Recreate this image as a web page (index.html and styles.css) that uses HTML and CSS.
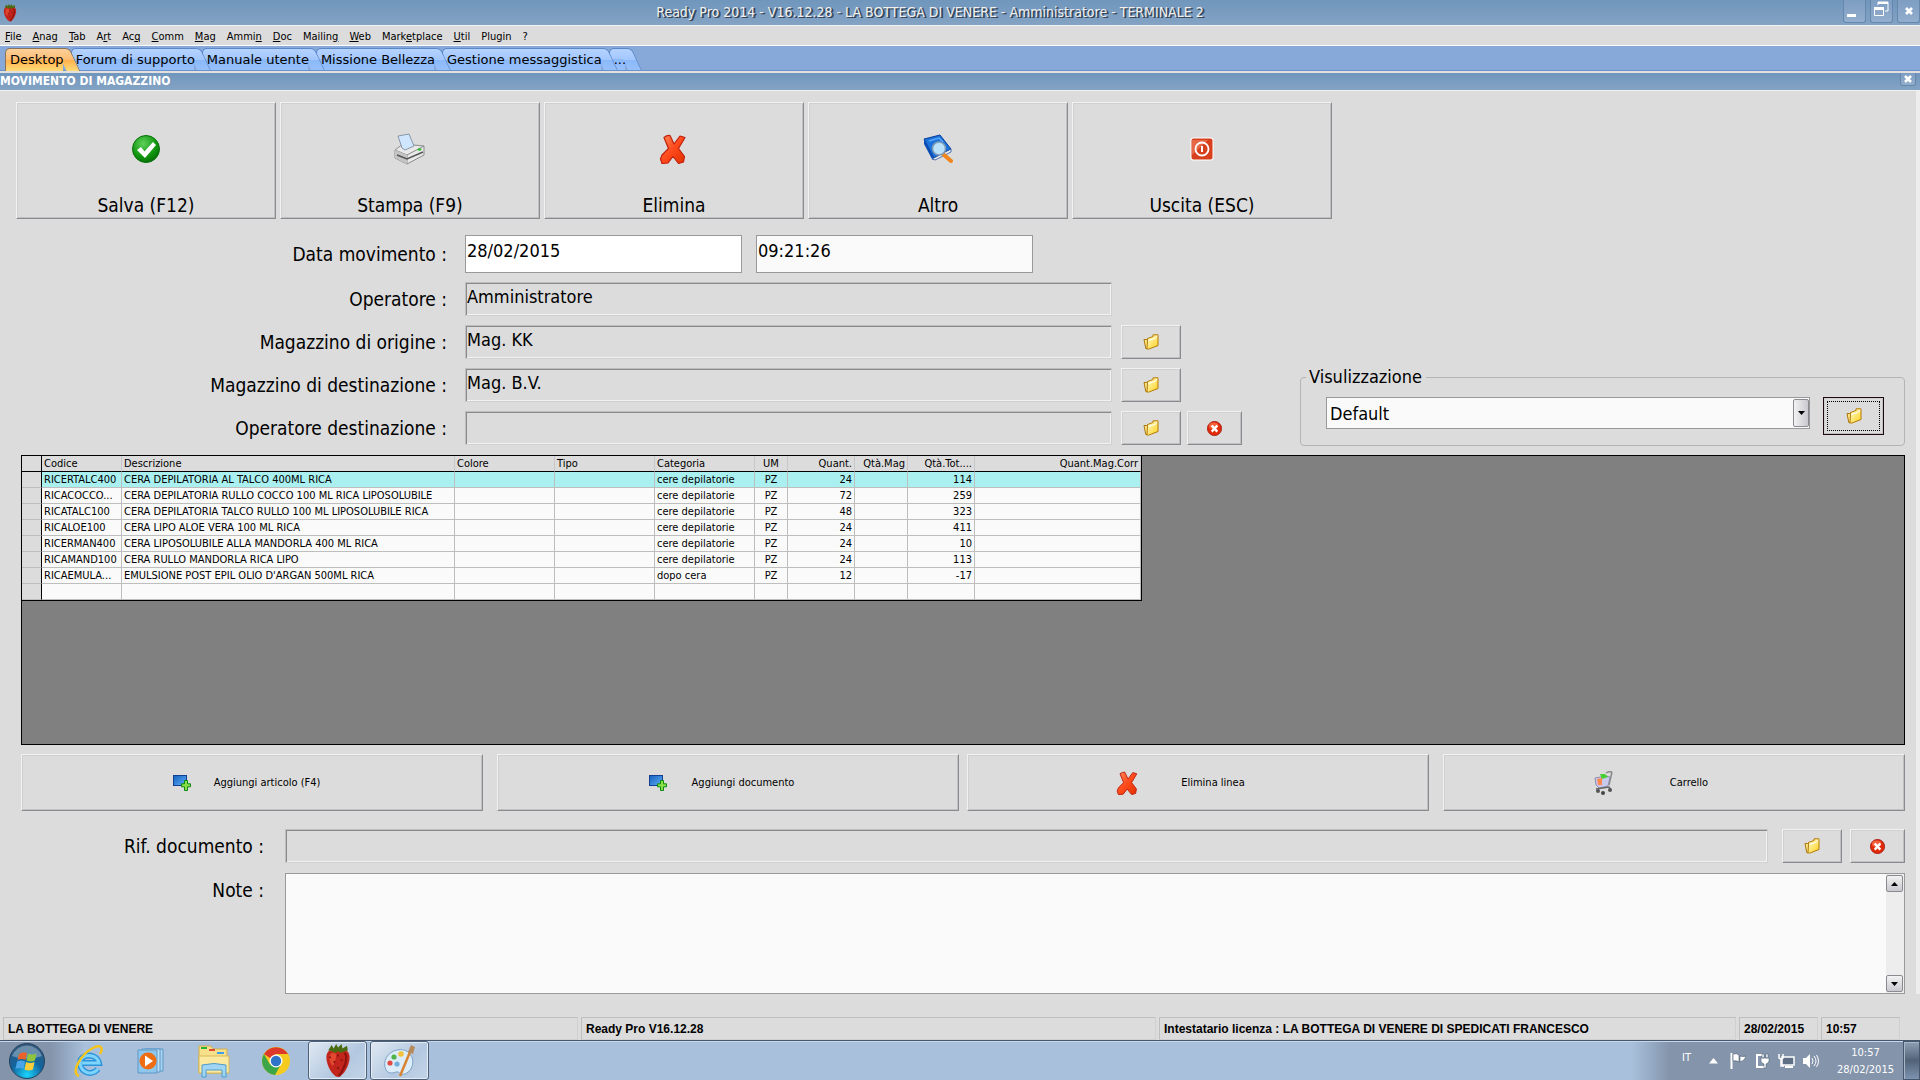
FILE: index.html
```html
<!DOCTYPE html>
<html lang="it">
<head>
<meta charset="utf-8">
<title>Ready Pro 2014 - Movimento di magazzino</title>
<link rel="stylesheet" href="styles.css">
</head>
<body>
<svg class="defs" aria-hidden="true">
  <defs>
    <linearGradient id="g-red" x1="0" y1="0" x2="1" y2="1"><stop offset="0" stop-color="#ff8a5c"/><stop offset="0.5" stop-color="#ff4a1c"/><stop offset="1" stop-color="#e03000"/></linearGradient>
    <radialGradient id="g-green" cx="0.4" cy="0.3" r="0.8"><stop offset="0" stop-color="#5fd05a"/><stop offset="0.6" stop-color="#10960f"/><stop offset="1" stop-color="#046404"/></radialGradient>
    <linearGradient id="g-yellow" x1="0" y1="0" x2="1" y2="1"><stop offset="0" stop-color="#fffbd0"/><stop offset="1" stop-color="#ffd21a"/></linearGradient>
    <linearGradient id="g-blue" x1="0" y1="0" x2="1" y2="1"><stop offset="0" stop-color="#1560c0"/><stop offset="1" stop-color="#5fb0f5"/></linearGradient>
    <radialGradient id="g-orb" cx="0.5" cy="0.9" r="0.9"><stop offset="0" stop-color="#19d5ff"/><stop offset="0.5" stop-color="#11649e"/><stop offset="1" stop-color="#37597a"/></radialGradient>
    <symbol id="i-folder" viewBox="0 0 16 16">
      <path d="M1 5.500h2.500l1-.8V13l-.5 2-1.200-.5z" fill="#ffe98a" stroke="#a87408"/>
      <path d="M4.500 4.500l5.500-2V.8h5v10.700l-9.500 3.700-1.500-.5z" fill="url(#g-yellow)" stroke="#b47a08"/>
      <path d="M5.500 6.500l7-2.300 1.500-2.500" fill="none" stroke="#fff" stroke-width="1"/>
    </symbol>
    <symbol id="i-cancel" viewBox="0 0 16 16">
      <circle cx="8" cy="8" r="7.500" fill="#e22b08" stroke="#a81a10"/>
      <ellipse cx="7" cy="5" rx="5" ry="3.500" fill="#ff8462" opacity=".6"/>
      <path d="M5 4.800l6 6.600M11 4.800l-6 6.600" stroke="#fff" stroke-width="2.600"/>
    </symbol>
    <symbol id="i-delete" viewBox="0 0 30 30">
      <path d="M5 3.500q3-2.500 6-2l4 8.500 6-8 5 1.500-6.500 11 6 8-1 5.500-5 1.500-5.500-7-5 6.500-6 .5L1.500 25l1.500-4 6.500-6.500z" fill="url(#g-red)" stroke="#c0200c" stroke-width="1.200" stroke-linejoin="round"/>
    </symbol>
    <symbol id="i-add" viewBox="0 0 18 16">
      <rect x=".5" y=".5" width="13" height="10" fill="url(#g-blue)" stroke="#123f94"/>
      <path d="M11.500 5.500h3v3.300h3v3h-3v3.700h-3v-3.700h-3v-3h3z" fill="#8be04a" stroke="#0c8a10"/>
    </symbol>
    <symbol id="i-berry" viewBox="0 0 28 38">
      <path d="M14 6C6 4 1 8 1 15c0 9 7 21 13 22 6-1 13-13 13-22 0-7-5-11-13-9z" fill="#c3251c"/>
      <path d="M5 12c2-3 6-3 7 0 0 5-2 10-4 13-3-4-5-9-3-13z" fill="#e2482f"/>
      <path d="M21 10c4 3 3 13-6 26" fill="none" stroke="#8f130f" stroke-width="2.500"/>
      <path d="M4 14h2v2H4zM9 19h2v2H9zM17 17h2v2h-2zM13 26h2v2h-2zM20 24h2v2h-2zM13 12h2v2h-2z" fill="#7e1410"/>
      <path d="M3 7l4-6 2 4 3-5 2 4 4-4 1 5 5-3 1 5-8 3-3-2-3 2-4-2z" fill="#4c6a12"/>
    </symbol>
    <symbol id="i-x" viewBox="0 0 8 8"><path d="M1 1l6 6M7 1L1 7" stroke="#fff" stroke-width="2.600"/></symbol>
  </defs>
</svg>

<header class="titlebar">
  <svg class="berry-small"><use href="#i-berry"/></svg>
  <h1>Ready Pro 2014 - V16.12.28 - LA BOTTEGA DI VENERE - Amministratore - TERMINALE 2</h1>
  <div class="winbtns">
    <button type="button" aria-label="Riduci a icona"><svg width="22" height="24"><path d="M3 15h9v3H3z" fill="#fff"/></svg></button>
    <button type="button" aria-label="Ripristina"><svg width="22" height="24"><path d="M7 3h10v9h-3M7 3v3" fill="none" stroke="#fff"/><path d="M7 3h10v2H7z" fill="#fff"/><path d="M3.500 8.500h9v8h-9z" fill="#8ba6c6" stroke="#fff"/><path d="M3 8h10v3H3z" fill="#fff"/></svg></button>
    <button type="button" aria-label="Chiudi"><svg width="8" height="8"><use href="#i-x"/></svg></button>
  </div>
</header>

<nav class="menubar" aria-label="Menu">
  <a href="#"><u>F</u>ile</a><a href="#"><u>A</u>nag</a><a href="#"><u>T</u>ab</a><a href="#">A<u>r</u>t</a><a href="#">Ac<u>q</u></a><a href="#"><u>C</u>omm</a><a href="#"><u>M</u>ag</a><a href="#">Ammi<u>n</u></a><a href="#"><u>D</u>oc</a><a href="#">Mailin<u>g</u></a><a href="#"><u>W</u>eb</a><a href="#">Mark<u>e</u>tplace</a><a href="#"><u>U</u>til</a><a href="#">Plugin</a><a href="#">?</a>
</nav>

<nav class="tabs" aria-label="Schede">
  <a class="tab active" href="#"><span>Desktop</span></a>
  <a class="tab" href="#"><span>Forum di supporto</span></a>
  <a class="tab" href="#"><span>Manuale utente</span></a>
  <a class="tab" href="#"><span>Missione Bellezza</span></a>
  <a class="tab" href="#"><span>Gestione messaggistica</span></a>
  <a class="tab" href="#"><span>...</span></a>
</nav>

<div class="subtitle">
  <h2>MOVIMENTO DI MAGAZZINO</h2>
  <button type="button" aria-label="Chiudi scheda"><svg width="8" height="8"><use href="#i-x"/></svg></button>
</div>

<main>
  <div class="toolbar">
    <button type="button" class="raised">
      <svg width="30" height="30"><circle cx="15" cy="15" r="13.500" fill="url(#g-green)" stroke="#087008"/><path d="M6 16l4-3 3.500 4.500L22 8l3 3-11 13z" fill="#fff"/></svg>
      <span>Salva (F12)</span>
    </button>
    <button type="button" class="raised">
      <svg width="32" height="32"><path d="M1 17l8-6 21 2v9l-17 9-12-6z" fill="#e9e9e9" stroke="#8b8b8b"/><path d="M1 17l12 5 17-9M13 22v9" fill="none" stroke="#8b8b8b"/><path d="M1 17l12 5v9L1 25z" fill="#c4c4c4"/><path d="M3 22l10 4 16-7" fill="none" stroke="#555" stroke-width="1.500"/><path d="M8 15L4 3l11-2 5 12-9 4z" fill="#cfe6ff" stroke="#8a97a8"/><path d="M25 15l3 1-2 2-3-1z" fill="#2fc02f"/></svg>
      <span>Stampa (F9)</span>
    </button>
    <button type="button" class="raised">
      <svg width="30" height="30"><use href="#i-delete"/></svg>
      <span>Elimina</span>
    </button>
    <button type="button" class="raised">
      <svg width="30" height="30"><path d="M1 5l16-4 11 14-17 9z" fill="#1b72dc" stroke="#0a3f9a"/><path d="M1 5v5l8 15 2-1z" fill="#0b4db4"/><path d="M11 24l17-9v3l-16 8-3-1z" fill="#eee" stroke="#0a3f9a" stroke-width=".7"/><path d="M6 7l10-3 4 4" fill="none" stroke="#59a8f5" stroke-width="1.500"/><path d="M20 20l8 7" stroke="#f0851c" stroke-width="4" stroke-linecap="round"/><circle cx="16" cy="14.500" r="6.500" fill="#b9e2fa" stroke="#7e9ab5" stroke-width="1.500"/></svg>
      <span>Altro</span>
    </button>
    <button type="button" class="raised">
      <svg width="24" height="24"><rect x=".5" y=".5" width="23" height="23" rx="3" fill="#fff"/><rect x="1.500" y="1.500" width="21" height="21" rx="2" fill="#d6401c"/><path d="M2 3h16L2 18z" fill="#f08263" opacity=".6"/><circle cx="12" cy="12" r="6.500" fill="none" stroke="#fff" stroke-width="1.800"/><path d="M12 9v6" stroke="#fff" stroke-width="2"/></svg>
      <span>Uscita (ESC)</span>
    </button>
  </div>

  <div class="upper">
    <form class="fields">
      <label for="data">Data movimento :</label>
      <div class="row"><input id="data" class="box white" type="text" value="28/02/2015"><input class="box" type="text" aria-label="Ora movimento" value="09:21:26"></div>
      <label for="op">Operatore :</label>
      <div class="row"><input id="op" class="sunken" type="text" readonly value="Amministratore"></div>
      <label for="orig">Magazzino di origine :</label>
      <div class="row"><input id="orig" class="sunken" type="text" readonly value="Mag. KK"><button type="button" class="raised pick" aria-label="Scegli"><svg width="16" height="16"><use href="#i-folder"/></svg></button></div>
      <label for="dest">Magazzino di destinazione :</label>
      <div class="row"><input id="dest" class="sunken" type="text" readonly value="Mag. B.V."><button type="button" class="raised pick" aria-label="Scegli"><svg width="16" height="16"><use href="#i-folder"/></svg></button></div>
      <label for="opdest">Operatore destinazione :</label>
      <div class="row"><input id="opdest" class="sunken" type="text" readonly value=""><button type="button" class="raised pick" aria-label="Scegli"><svg width="16" height="16"><use href="#i-folder"/></svg></button><button type="button" class="raised clear" aria-label="Cancella"><svg width="15" height="15"><use href="#i-cancel"/></svg></button></div>
    </form>
    <fieldset class="view">
      <legend>Visulizzazione</legend>
      <div class="view-row">
        <div class="combo">
          <select aria-label="Visulizzazione"><option>Default</option></select>
          <span class="combo-arrow"><svg width="7" height="4"><path d="M0 0h7L3.500 4z"/></svg></span>
        </div>
        <button type="button" class="raised focused" aria-label="Scegli"><svg width="16" height="16"><use href="#i-folder"/></svg></button>
      </div>
    </fieldset>
  </div>

  <div class="grid">
    <table>
      <colgroup><col class="c-head"><col class="c-code"><col class="c-desc"><col class="c-mid"><col class="c-mid"><col class="c-mid"><col class="c-um"><col class="c-qty"><col class="c-mag"><col class="c-qty"><col class="c-corr"></colgroup>
      <thead><tr><th></th><th>Codice</th><th>Descrizione</th><th>Colore</th><th>Tipo</th><th>Categoria</th><th class="ctr">UM</th><th class="num">Quant.</th><th class="num">Qtà.Mag</th><th class="num">Qtà.Tot....</th><th class="num">Quant.Mag.Corr</th></tr></thead>
      <tbody>
        <tr class="sel"><th></th><td>RICERTALC400</td><td>CERA DEPILATORIA AL TALCO 400ML RICA</td><td></td><td></td><td>cere depilatorie</td><td class="ctr">PZ</td><td class="num">24</td><td></td><td class="num">114</td><td></td></tr>
        <tr><th></th><td>RICACOCCO...</td><td>CERA DEPILATORIA RULLO COCCO 100 ML RICA LIPOSOLUBILE</td><td></td><td></td><td>cere depilatorie</td><td class="ctr">PZ</td><td class="num">72</td><td></td><td class="num">259</td><td></td></tr>
        <tr><th></th><td>RICATALC100</td><td>CERA DEPILATORIA TALCO RULLO 100 ML LIPOSOLUBILE RICA</td><td></td><td></td><td>cere depilatorie</td><td class="ctr">PZ</td><td class="num">48</td><td></td><td class="num">323</td><td></td></tr>
        <tr><th></th><td>RICALOE100</td><td>CERA LIPO ALOE VERA 100 ML RICA</td><td></td><td></td><td>cere depilatorie</td><td class="ctr">PZ</td><td class="num">24</td><td></td><td class="num">411</td><td></td></tr>
        <tr><th></th><td>RICERMAN400</td><td>CERA LIPOSOLUBILE ALLA MANDORLA 400 ML RICA</td><td></td><td></td><td>cere depilatorie</td><td class="ctr">PZ</td><td class="num">24</td><td></td><td class="num">10</td><td></td></tr>
        <tr><th></th><td>RICAMAND100</td><td>CERA RULLO MANDORLA RICA LIPO</td><td></td><td></td><td>cere depilatorie</td><td class="ctr">PZ</td><td class="num">24</td><td></td><td class="num">113</td><td></td></tr>
        <tr><th></th><td>RICAEMULA...</td><td>EMULSIONE POST EPIL OLIO D'ARGAN 500ML RICA</td><td></td><td></td><td>dopo cera</td><td class="ctr">PZ</td><td class="num">12</td><td></td><td class="num">-17</td><td></td></tr>
        <tr><th></th><td></td><td></td><td></td><td></td><td></td><td></td><td></td><td></td><td></td><td></td></tr>
      </tbody>
    </table>
  </div>

  <div class="actions">
    <div class="pair">
      <button type="button" class="raised"><svg width="18" height="16"><use href="#i-add"/></svg><span>Aggiungi articolo (F4)</span></button>
      <button type="button" class="raised"><svg width="18" height="16"><use href="#i-add"/></svg><span>Aggiungi documento</span></button>
    </div>
    <div class="pair">
      <button type="button" class="raised"><svg width="24" height="24"><use href="#i-delete"/></svg><span>Elimina linea</span></button>
      <button type="button" class="raised"><svg width="24" height="24"><path d="M20 1l-3 13M14 2q3-2 6-1" fill="none" stroke="#8a8a8a" stroke-width="1.500"/><path d="M3 7l11-2 4 1-2 9-9 2-3-3z" fill="#c9c8ee" stroke="#8f8fae"/><path d="M5 8l5-1v7H6z" fill="#ff8a50"/><path d="M8 3h5l3 3-6 2z" fill="#46cf34"/><path d="M4 18l13-2 2 3" fill="none" stroke="#666" stroke-width="1.500"/><circle cx="6" cy="20" r="2" fill="#555"/><circle cx="11" cy="22" r="2" fill="#444"/><circle cx="18" cy="19" r="2" fill="#555"/></svg><span>Carrello</span></button>
    </div>
  </div>

  <form class="lower">
    <label for="rif">Rif. documento :</label>
    <div class="row"><input id="rif" class="sunken wide" type="text" readonly value=""><button type="button" class="raised pick" aria-label="Scegli"><svg width="16" height="16"><use href="#i-folder"/></svg></button><button type="button" class="raised clear" aria-label="Cancella"><svg width="15" height="15"><use href="#i-cancel"/></svg></button></div>
    <label for="note">Note :</label>
    <div class="notes">
      <textarea id="note"></textarea>
      <div class="scroll">
        <button type="button" aria-label="Su"><svg width="7" height="4"><path d="M0 4h7L3.500 0z"/></svg></button>
        <button type="button" aria-label="Giù"><svg width="7" height="4"><path d="M0 0h7L3.500 4z"/></svg></button>
      </div>
    </div>
  </form>
</main>

<footer class="status">
  <div>LA BOTTEGA DI VENERE</div><div>Ready Pro V16.12.28</div><div>Intestatario licenza : LA BOTTEGA DI VENERE DI SPEDICATI FRANCESCO</div><div class="s-date">28/02/2015</div><div class="s-date">10:57</div>
</footer>

<div class="taskbar">
  <button type="button" class="start" aria-label="Start"><svg width="38" height="38"><circle cx="19" cy="19" r="17.500" fill="url(#g-orb)" stroke="#24415f"/><path d="M4 14a16 16 0 0 1 30 0q-15 6-30 0z" fill="#fff" opacity=".3"/><path d="M11 12q4-3 8-1l-1.500 7q-4-2-8 0z" fill="#e8642a"/><path d="M20 11.500q4 2 8.500 0L27 18.500q-4 2-8.500 0z" fill="#8fc43f"/><path d="M9 19.500q4-2 8 0L15.500 27q-4-2-8 0z" fill="#4aa5e8"/><path d="M18 20q4 2 8.500 0L25 27.500q-4 2-8.500 0z" fill="#f8cf3a"/></svg></button>
  <button type="button" class="task" aria-label="Internet Explorer"><svg width="34" height="34"><path d="M9 19h17a10 9 0 0 0-18.500-3A10 10 0 0 0 25 25" fill="none" stroke="#2a94dc" stroke-width="6"/><path d="M9 19h17a10 9 0 0 0-18.500-3A10 10 0 0 0 25 25" fill="none" stroke="#7fd4fb" stroke-width="3"/><path d="M6 32C-3 29 8 10 20 4c7-4 11-1 7 6" fill="none" stroke="#f5c51c" stroke-width="2.500"/></svg></button>
  <button type="button" class="task" aria-label="Windows Media Player"><svg width="30" height="28"><path d="M8 2h18v22H8z" fill="#a9d2ee" stroke="#5d98c8"/><path d="M5 2h18v23H5z" fill="#bfe0f5" stroke="#5d98c8"/><path d="M1 3h19v23H1z" fill="#8fc6ec" stroke="#5d98c8"/><circle cx="11" cy="14" r="8.500" fill="#ee6d12"/><path d="M8 8.500l8 5.500-8 5.500z" fill="#fff"/></svg></button>
  <button type="button" class="task" aria-label="Esplora risorse"><svg width="34" height="34"><path d="M2 2h12l2 3h14v24H2z" fill="#f7e08a" stroke="#d1ad4b"/><path d="M4 3h6v2H4z" fill="#2bb13a"/><path d="M12 5h6v2h-6z" fill="#e0483a"/><path d="M20 8h7v2h-7z" fill="#3c9ee6"/><path d="M2 12h30v17H2z" fill="#fbe9a0" stroke="#d8b85a"/><path d="M5 33V21q12-3 24 0v12h-4v-7H9v7z" fill="#9fd5f2" stroke="#4e9ccb"/></svg></button>
  <button type="button" class="task" aria-label="Chrome"><svg width="30" height="30"><circle cx="15" cy="15" r="14" fill="#f5cb1f"/><path d="M2.900 8A14 14 0 0 0 14 29l6-11-11 .5z" fill="#3ba648"/><path d="M3 8a14 14 0 0 1 24 0H15l-6 4z" fill="#dd3a2c"/><circle cx="15" cy="15" r="6.500" fill="#fff"/><circle cx="15" cy="15" r="5.200" fill="#2f73c8"/></svg></button>
  <button type="button" class="task open" aria-label="Ready Pro"><svg width="26" height="34"><use href="#i-berry"/></svg></button>
  <button type="button" class="task open" aria-label="Paint"><svg width="34" height="34"><path d="M14 6C4 8-1 18 3 26c4 6 10 1 12 2s4 4 9 1c6-4 8-13 3-19-3-4-8-5-13-4z" fill="#dcecf8" stroke="#7da3c4"/><circle cx="7" cy="19" r="2.600" fill="#e04a44"/><circle cx="11" cy="13" r="2.600" fill="#4fb54a"/><circle cx="18" cy="10" r="2.800" fill="#f3c13a"/><circle cx="14" cy="20" r="2.600" fill="#74aede"/><path d="M27 8L17 32" stroke="#d98330" stroke-width="2.500"/><path d="M25 8l3-7 4 2-2 7z" fill="#b48a5e"/></svg></button>
  <div class="tray">
    <span class="lang">IT</span>
    <svg class="more" width="9" height="6"><path d="M0 5.500L4.500 0 9 5.500z" fill="#fff"/></svg>
    <svg width="16" height="16"><path d="M1.500 0v16" stroke="#fff" stroke-width="2"/><path d="M3 1q4-1 6 1v7q-3-2-6-1zM10 3q3 1 6 0-1 5-6 6z" fill="#fff" stroke="#47586e" stroke-width=".6"/></svg>
    <svg width="16" height="16"><path d="M9 2H3v12h7" fill="none" stroke="#fff" stroke-width="2"/><path d="M7 5h8v3q-1 3-3 3v4h-2v-4Q7 10 7 8zM8 1h2v4H8zM12 1h2v4h-2z" fill="#fff" stroke="#47586e" stroke-width=".5"/></svg>
    <svg width="17" height="16"><rect x="4" y="4" width="12" height="8" fill="#5f7086" stroke="#fff" stroke-width="1.500"/><path d="M7 14h8" stroke="#fff" stroke-width="2"/><path d="M1 1v4q2 2 4 0V1M3 6v7h3" fill="none" stroke="#fff" stroke-width="1.500"/></svg>
    <svg width="16" height="16"><path d="M0 5h3l4-4v14l-4-4H0z" fill="#fff"/><path d="M9 5q2 3 0 6M11 3q4 5 0 10M13.500 2q4 6 0 12" fill="none" stroke="#fff"/></svg>
    <time>10:57<br>28/02/2015</time>
  </div>
  <button type="button" class="peek" aria-label="Mostra desktop"></button>
</div>
</body>
</html>
```
FILE: styles.css
```css
* { box-sizing: border-box; }

body {
  margin: 0;
  min-height: 100vh;
  display: flex;
  flex-direction: column;
  background: #dcdcdc;
  color: #000;
  font-family: "DejaVu Sans Condensed", "DejaVu Sans", sans-serif;
  font-size: 18px;
}

button, input, select, textarea { font: inherit; color: inherit; margin: 0; }
a { color: inherit; text-decoration: none; }
svg { display: block; }
.defs { position: absolute; width: 0; height: 0; }

/* title bar */
.titlebar {
  display: flex;
  align-items: center;
  height: 26px;
  padding-left: 3px;
  border-bottom: 1px solid #f2f2f2;
  background: linear-gradient(#7096bc, #84a3c4);
}
.berry-small { width: 14px; height: 18px; }
.titlebar h1 {
  flex: 1;
  margin: 0;
  padding: 0 0 2px;
  text-align: center;
  font-size: 14px;
  font-weight: normal;
  color: #f0f0f0;
  text-shadow: 1px 1px 0 #33475c, 2px 1px 0 #33475c;
}
.winbtns { display: flex; gap: 4px; height: 25px; align-items: flex-start; }
.winbtns button, .subtitle button {
  display: flex;
  align-items: center;
  justify-content: center;
  width: 23px;
  height: 23px;
  padding: 0;
  border: 1px solid #6688ad;
  border-top: 0;
  border-radius: 0 0 3px 3px;
  background: linear-gradient(#7d9dc2, #93aecd);
}

/* menu */
.menubar {
  display: flex;
  gap: 11px;
  height: 20px;
  padding: 0 5px;
  border-bottom: 1px solid #fff;
  font-size: 11px;
  line-height: 21px;
}

/* tabs */
.tabs {
  display: flex;
  height: 27px;
  padding: 2px 5px 0;
  border-bottom: 2px solid #e2dfe0;
  background: #87a9d9;
  box-shadow: inset 0 -1px #6a93cc;
  font-family: "DejaVu Sans", sans-serif;
  font-size: 13px;
  line-height: 23px;
}
.tab { position: relative; padding: 0 7px 0 5px; z-index: 1; }
.tab:nth-child(1) { z-index: 6; }
.tab:nth-child(2) { z-index: 5; }
.tab:nth-child(3) { z-index: 4; }
.tab:nth-child(4) { z-index: 3; }
.tab:nth-child(5) { z-index: 2; }
.tab span { position: relative; z-index: 1; }
.tab::before, .tab::after {
  content: "";
  position: absolute;
  top: 0;
  bottom: 0;
  background: linear-gradient(#b4d2ff, #a3c7fe 50%, #8ab8f8 50%, #96c0fb);
  border: 1px solid #5c88c8;
  border-bottom-color: #6a93cc;
}
.tab::before { left: 0; right: 8px; border-right: 0; border-radius: 5px 0 0 0; }
.tab::after {
  right: -4px;
  width: 13px;
  border-left: 0;
  border-radius: 0 5px 0 0;
  transform: skewX(25deg);
}
.tab.active::before, .tab.active::after {
  background: linear-gradient(#fcd09a, #fdbd72 50%, #ffb04c 50%, #ffdc78);
  border-color: #8c7458;
  border-bottom: 0;
}

/* module title */
.subtitle {
  display: flex;
  justify-content: space-between;
  height: 18px;
  padding-right: 4px;
  border-bottom: 1px solid #f0f0f0;
  background: linear-gradient(#7096bc, #84a3c4);
}
.subtitle h2 {
  margin: 0;
  font-size: 12px;
  font-weight: bold;
  line-height: 16px;
  color: #fff;
}
.subtitle button { width: 16px; height: 13px; }

/* work area */
main {
  flex: 1;
  display: flex;
  flex-direction: column;
  padding: 11px 11px 0 16px;
  border-right: 4px solid #ededee;
  margin-bottom: 2px;
}
.raised {
  display: flex;
  align-items: center;
  justify-content: center;
  padding: 0;
  border: 1px solid;
  border-color: #f2f2f2 #8a8a90 #8a8a90 #f2f2f2;
  background: #dcdcdc;
  box-shadow: inset 1px 1px #d0d0d2, inset -1px -1px #c0c0c0;
}
.toolbar { display: grid; grid-template-columns: repeat(5, 260px); gap: 4px; }
.toolbar .raised { flex-direction: column; height: 117px; padding-top: 3px; justify-content: flex-start; }
.toolbar svg { margin: auto; }
.toolbar span { font-size: 19px; line-height: 26px; }

.upper { display: flex; justify-content: space-between; align-items: flex-end; margin-top: 16px; }
.fields { display: grid; grid-template-columns: 431px auto; column-gap: 18px; row-gap: 9px; padding-bottom: 1px; }
.fields label, .lower label { text-align: right; font-size: 19px; line-height: 34px; }
.fields label { align-self: center; }
.row { display: flex; }
.box, .sunken { padding: 0 0 6px 1px; height: 34px; border: 1px solid #999; background: #fafafa; }
.box { width: 277px; height: 38px; margin-right: 14px; padding-bottom: 8px; }
.box.white { background: #fff; }
.sunken {
  width: 647px;
  background: #dcdcdc;
  border-color: #bebebe #d0d0d2 #d0d0d2 #bebebe;
  box-shadow: inset 1px 1px #8a8a8c, inset -1px -1px #f2f2f2;
}
.pick { width: 60px; margin-left: 9px; }
.clear { width: 55px; margin-left: 6px; }

.view { width: 605px; margin: 0; padding: 0; border: 1px solid #b4b4b6; border-radius: 4px; }
.view legend { margin-left: 5px; padding: 0 4px 0 3px; line-height: 20px; }
.view-row { display: flex; gap: 13px; padding: 10px 20px 10px 25px; align-items: flex-start; }
.combo { position: relative; flex: 1; }
.combo select {
  appearance: none;
  width: 100%;
  height: 32px;
  padding: 0 20px 0 3px;
  border: 1px solid #999;
  border-radius: 0;
  background: #fafafa;
}
.combo-arrow {
  position: absolute;
  top: 2px;
  right: 1px;
  width: 16px;
  height: 28px;
  display: flex;
  align-items: center;
  justify-content: center;
  border: 1px solid #8a8a90;
  border-radius: 2px;
  background: linear-gradient(90deg, #f2f2f2, #c8c8d0);
  pointer-events: none;
}
.focused { width: 61px; height: 38px; border-color: #1c0a0c; outline: 1px dotted #000; outline-offset: -5px; }

/* data grid */
.grid {
  flex: 1;
  min-height: 160px;
  margin: 9px 0 9px 5px;
  border: 1px solid #000;
  background: #808080;
}
.grid table {
  width: 1120px;
  table-layout: fixed;
  border-spacing: 0;
  border: solid #000;
  border-width: 0 1px 1px 0;
  font-size: 11px;
  line-height: 15px;
}
.c-head { width: 20px; }
.c-code { width: 80px; }
.c-desc { width: 333px; }
.c-mid { width: 100px; }
.c-um { width: 33px; }
.c-qty { width: 67px; }
.c-mag { width: 53px; }
.c-corr { width: 166px; }
.grid th, .grid td {
  height: 16px;
  padding: 0 2px;
  border: solid #bebebe;
  border-width: 0 1px 1px 0;
  background: #fafafa;
  font-weight: normal;
  text-align: left;
  white-space: nowrap;
  overflow: hidden;
}
.grid th { background: #dcdcdc; }
.grid thead th { border-right-color: #c8c8cc; border-bottom-color: #000; }
.grid th:first-child { border-right-color: #000; }
.grid .sel td { background: #aaf0f0; }
.grid .ctr { text-align: center; }
.grid .num { text-align: right; }

.actions { display: flex; gap: 8px; margin-left: 5px; }
.pair { flex: 1; display: flex; gap: 14px; }
.pair .raised {
  flex: 1;
  display: grid;
  grid-template-columns: 40px 130px;
  height: 57px;
  padding-right: 150px;
  padding-left: 140px;
  justify-items: center;
  font-size: 11px;
}

.lower { display: grid; grid-template-columns: 248px 1fr; column-gap: 21px; row-gap: 10px; margin-top: 18px; }
.lower .wide { flex: 1; }
.lower .pick { margin-left: 14px; }
.lower .clear { margin-left: 8px; }
.notes { display: flex; height: 121px; border: 1px solid #999; background: #fafafa; }
.notes textarea { flex: 1; border: 0; resize: none; background: transparent; }
.scroll { display: flex; flex-direction: column; justify-content: space-between; width: 18px; padding: 1px 1px 1px 0; background: #ededee; }
.scroll button {
  display: flex;
  align-items: center;
  justify-content: center;
  height: 17px;
  padding: 0;
  border: 1px solid #8a8a90;
  border-radius: 2px;
  background: linear-gradient(#f2f2f2, #c8c8d0);
}

/* status bar */
.status {
  display: grid;
  grid-template-columns: 576fr 576fr 578fr 79px 79px;
  gap: 3px;
  margin-top: 21px;
  padding: 0 20px 0 3px;
  font-family: "Liberation Sans", sans-serif;
  font-size: 12px;
  font-weight: bold;
  line-height: 22px;
}
.status div { padding-left: 4px; border: 1px solid; border-color: #bebebe #d0d0d2 #d0d0d2 #bebebe; height: 23px; white-space: nowrap; }

/* taskbar */
.taskbar {
  display: flex;
  height: 40px;
  border-top: 1px solid #46566c;
  background: linear-gradient(90deg, #8394ab, #8394ab 50px, #a8c0dc 85px, #a8c0dc calc(100% - 288px), #8394ab calc(100% - 250px));
  box-shadow: inset 0 1px #c6d8ea;
}
.start, .task { display: flex; align-items: center; justify-content: center; padding: 0; border: 0; background: none; }
.start { width: 54px; margin-right: 5px; }
.task { width: 62px; }
.task.open {
  width: 59px;
  margin-left: 1px;
  margin-right: 2px;
  border: 1px solid #4d6078;
  border-radius: 3px;
  background: linear-gradient(135deg, #dfe8f2, #b3c8e0 60%, #c3d4e7);
  box-shadow: inset 0 0 0 1px #e4edf6;
}
.tray {
  display: flex;
  align-items: center;
  gap: 8px;
  margin-left: auto;
  padding-right: 9px;
  color: #fff;
  font-size: 11px;
}
.lang { margin-right: 10px; padding-bottom: 6px; }
.more { margin-right: 4px; }
.tray time { margin-left: 10px; text-align: center; line-height: 17px; }
.peek { width: 17px; padding: 0; border: 1px solid #46566c; background: linear-gradient(#8f9fb3, #526378 50%, #7d93b0); box-shadow: inset 1px 1px #a9b6c6; }
```
